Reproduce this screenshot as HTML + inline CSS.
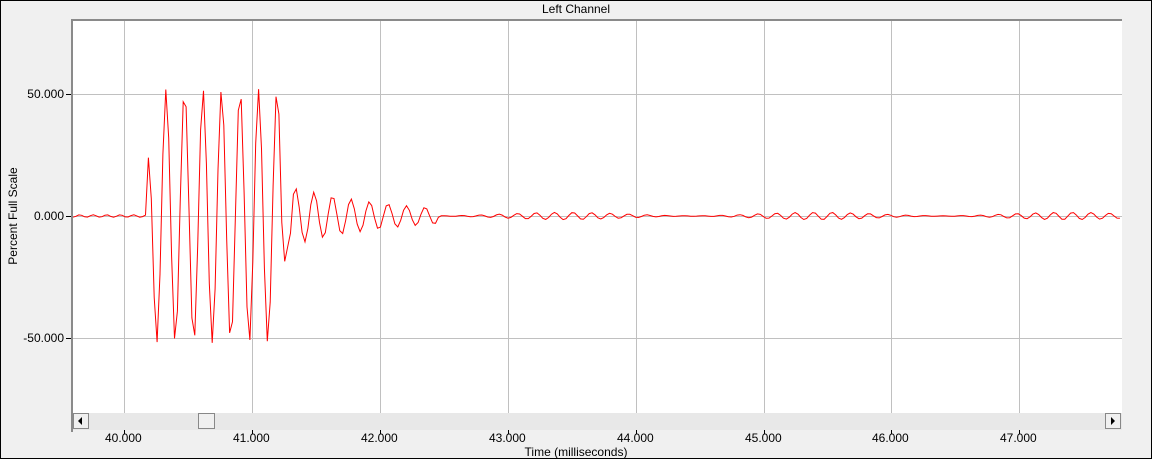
<!DOCTYPE html><html><head><style>
body{margin:0;width:1152px;height:459px;overflow:hidden;background:#f0f0f0;font-family:"Liberation Sans",sans-serif;font-size:12px;color:#000}
.f{position:absolute;left:0;top:0;width:1150px;height:457px;border:1px solid #000}
.t{position:absolute;white-space:nowrap}
</style></head><body><div class="f"></div>
<svg style="position:absolute;left:0;top:0" width="1152" height="459">
<rect x="71" y="19" width="1051" height="411" fill="#fff"/>
<g stroke="#c0c0c0" stroke-width="1">
<line x1="124.5" y1="19" x2="124.5" y2="413"/><line x1="252.5" y1="19" x2="252.5" y2="413"/><line x1="380.5" y1="19" x2="380.5" y2="413"/><line x1="508.5" y1="19" x2="508.5" y2="413"/><line x1="636.5" y1="19" x2="636.5" y2="413"/><line x1="764.5" y1="19" x2="764.5" y2="413"/><line x1="891.5" y1="19" x2="891.5" y2="413"/><line x1="1019.5" y1="19" x2="1019.5" y2="413"/>
<line x1="71" y1="94.5" x2="1122" y2="94.5"/><line x1="71" y1="216.5" x2="1122" y2="216.5"/><line x1="71" y1="338.5" x2="1122" y2="338.5"/>
</g>
<polyline id="w" fill="none" stroke="#ff0000" stroke-width="1"/>
<rect x="71" y="19" width="1051" height="2" fill="#8a8a8a"/>
<rect x="71" y="19" width="2" height="413" fill="#8a8a8a"/>
<rect x="73" y="413" width="1049" height="17" fill="#e8e8e8"/>
<rect x="73.5" y="413.5" width="15" height="15" fill="#f0f0f0" stroke="#888"/>
<polygon points="78,421 82,417 82,425" fill="#000"/>
<rect x="198.5" y="413.5" width="16" height="15" fill="#f0f0f0" stroke="#888"/>
<rect x="1105.5" y="413.5" width="15" height="15" fill="#f0f0f0" stroke="#888"/>
<polygon points="1115,421 1111,417 1111,425" fill="#000"/>
<g stroke="#000"><line x1="124.5" y1="430" x2="124.5" y2="434"/><line x1="252.5" y1="430" x2="252.5" y2="434"/><line x1="380.5" y1="430" x2="380.5" y2="434"/><line x1="508.5" y1="430" x2="508.5" y2="434"/><line x1="636.5" y1="430" x2="636.5" y2="434"/><line x1="764.5" y1="430" x2="764.5" y2="434"/><line x1="891.5" y1="430" x2="891.5" y2="434"/><line x1="1019.5" y1="430" x2="1019.5" y2="434"/>
<line x1="66" y1="94.5" x2="71" y2="94.5"/><line x1="66" y1="216.5" x2="71" y2="216.5"/><line x1="66" y1="338.5" x2="71" y2="338.5"/></g>
</svg>
<div class="t" style="left:0;width:1152px;text-align:center;top:2px">Left Channel</div>
<div class="t" style="right:1088px;top:87px">50.000</div>
<div class="t" style="right:1088px;top:209px">0.000</div>
<div class="t" style="right:1088px;top:331px">-50.000</div>
<div class="t" style="left:-42px;top:209px;width:110px;text-align:center;transform:rotate(-90deg)">Percent Full Scale</div>
<div class="t" style="left:105px;top:431px">40.000</div><div class="t" style="left:233px;top:431px">41.000</div><div class="t" style="left:361px;top:431px">42.000</div><div class="t" style="left:489px;top:431px">43.000</div><div class="t" style="left:617px;top:431px">44.000</div><div class="t" style="left:745px;top:431px">45.000</div><div class="t" style="left:872px;top:431px">46.000</div><div class="t" style="left:1000px;top:431px">47.000</div>
<div class="t" style="left:0;width:1152px;text-align:center;top:445px">Time (milliseconds)</div>
<script>
var p=[];for(var x=73;x<=1122;x+=2.9){var v;var ph=2*Math.PI*(x-161.4)/18.5;
if(x<146)v=0.5*Math.sin(x*1.7);
else if(x<283){var a=x<152?25:52;v=a*Math.sin(ph);}
else if(x<440){v=(13*Math.exp(-(x-283)/110))*Math.sin(ph);if(x<292)v=-22+(x-283)*2;}
else v=(0.8+0.7*Math.sin(x/40))*Math.sin(ph);
p.push(x.toFixed(1)+","+(216-v*2.44).toFixed(1));}
document.getElementById("w").setAttribute("points",p.join(" "));
</script>
</body></html>
